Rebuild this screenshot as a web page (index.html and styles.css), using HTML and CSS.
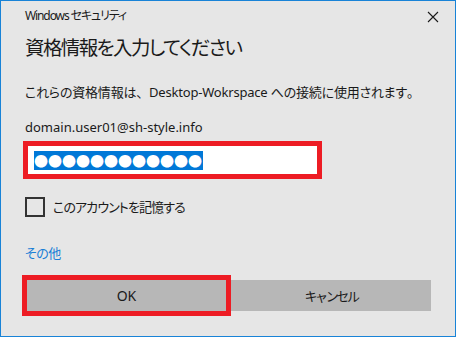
FILE: index.html
```html
<!DOCTYPE html>
<html lang="ja">
<head>
<meta charset="utf-8">
<link rel="stylesheet" href="styles.css">
</head>
<body>
<div class="dialog">
  <div class="titlebar">
    <span class="app-name">Windows セキュリティ</span>
    <svg class="close" width="12" height="12" viewBox="0 0 12 12"><path d="M1 1 L11 11 M11 1 L1 11" stroke="#1a1a1a" stroke-width="1.1" fill="none"/></svg>
  </div>
  <div class="content">
    <h1 class="heading">資格情報を入力してください</h1>
    <p class="desc">これらの資格情報は<span class="fw">、</span>Desktop-Wokrspace への接続に使用されます<span class="fw">。</span></p>
    <p class="user">domain.user01@sh-style.info</p>
    <div class="pw"><span class="sel">●●●●●●●●●●●●</span></div>
    <label class="remember"><span class="box"></span><span class="remember-text">このアカウントを記憶する</span></label>
    <a class="more">その他</a>
    <div class="buttons">
      <button class="btn ok">OK</button>
      <button class="btn cancel">キャンセル</button>
    </div>
  </div>
</div>
</body>
</html>
```
FILE: styles.css
```css
html, body {
  margin: 0;
  padding: 0;
  background: #e6e6e6;
}
.dialog {
  box-sizing: border-box;
  width: 456px;
  height: 337px;
  border: 1px solid #1883d7;
  background: #e6e6e6;
  font-family: "Noto Sans", "Noto Sans CJK JP", sans-serif;
  font-feature-settings: "palt";
  color: #000;
  display: flex;
  flex-direction: column;
}
.titlebar {
  display: flex;
  justify-content: space-between;
  align-items: center;
  padding: 7px 16px 0 24px;
  height: 16px;
}
.app-name {
  font-size: 12px;
  line-height: 16px;
  letter-spacing: -1.1px;
  color: #1a1a1a;
}
.close {
  display: block;
  margin-top: 2px;
}
.content {
  padding: 0 24px;
  display: flex;
  flex-direction: column;
  align-items: flex-start;
}
.heading {
  margin: 10px 0 0;
  font-size: 19.5px;
  letter-spacing: -1.6px;
  font-weight: normal;
  line-height: 28px;
  color: #1a1a1a;
}
.desc {
  margin: 20px 0 0;
  font-size: 13px;
  letter-spacing: -0.2px;
  line-height: 20px;
  white-space: nowrap;
  color: #1a1a1a;
}
.fw {
  font-feature-settings: normal;
}
.user {
  margin: 15px 0 0;
  font-size: 13px;
  line-height: 20px;
  color: #1a1a1a;
}
.pw {
  box-sizing: border-box;
  margin: 4px 0 0 -2px;
  width: 299px;
  height: 38px;
  border: 5px solid #ed1c24;
  background: #fff;
  padding: 5px 6px;
}
.sel {
  display: inline-block;
  background: #0078d7;
  color: #fff;
  font-family: "Noto Sans CJK JP", sans-serif;
  font-feature-settings: normal;
  font-size: 14px;
  line-height: 19px;
  height: 19px;
  padding-right: 1px;
  vertical-align: top;
}
.remember {
  display: flex;
  align-items: center;
  gap: 8px;
  margin-top: 18px;
}
.box {
  box-sizing: border-box;
  width: 20px;
  height: 20px;
  border: 2px solid #333;
}
.remember-text {
  font-size: 13px;
  letter-spacing: -0.9px;
  line-height: 20px;
  color: #1a1a1a;
}
.more {
  margin-top: 26px;
  font-size: 13px;
  letter-spacing: -0.5px;
  line-height: 20px;
  color: #1a7fd6;
}
.buttons {
  display: flex;
  margin: 12px 0 0 -3px;
}
.btn {
  box-sizing: border-box;
  font-family: inherit;
  font-size: 14px;
  color: #1a1a1a;
  background: #b7b7b7;
  border: none;
  margin: 0;
  padding: 0;
}
.ok {
  width: 209px;
  height: 41px;
  border: 5px solid #ed1c24;
}
.cancel {
  width: 200px;
  height: 31px;
  margin-top: 5px;
  font-size: 13px;
  letter-spacing: -2.4px;
}
```
